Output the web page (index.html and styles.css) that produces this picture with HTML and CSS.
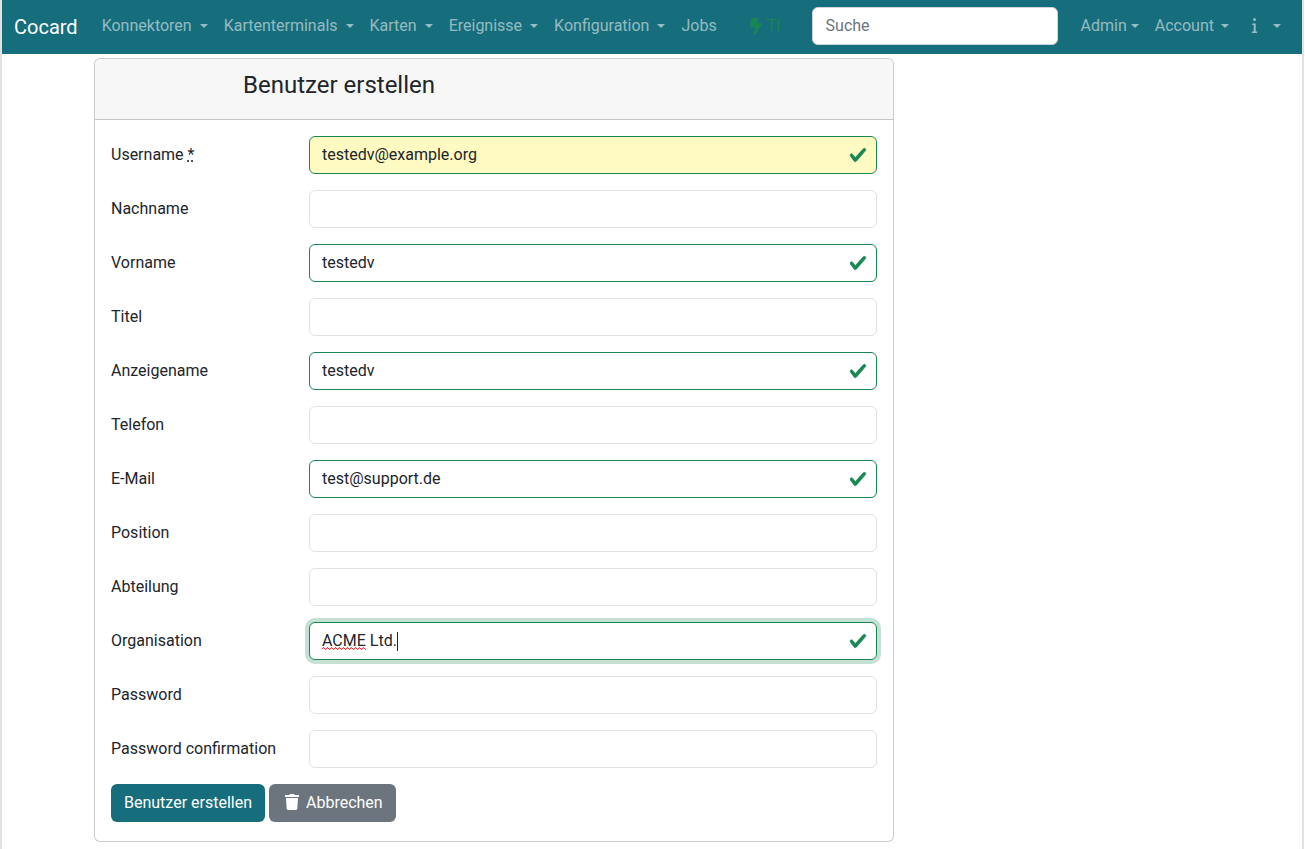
FILE: index.html
```html
<!DOCTYPE html>
<html lang="de">
<head>
<meta charset="utf-8">
<title>Benutzer erstellen</title>
<link rel="stylesheet" href="styles.css">
</head>
<body>
<nav class="navbar">
  <a class="brand">Cocard</a>
  <ul class="nav nav-main">
    <li class="nav-item caret">Konnektoren</li>
    <li class="nav-item caret">Kartenterminals</li>
    <li class="nav-item caret">Karten</li>
    <li class="nav-item caret">Ereignisse</li>
    <li class="nav-item caret">Konfiguration</li>
    <li class="nav-item">Jobs</li>
  </ul>
  <div class="ti">
    <svg class="bolt" viewBox="0 0 320 512" preserveAspectRatio="none" aria-hidden="true"><path d="M296 160H180.600L222.900 31.100C227 15.900 215.500 0 199.100 0H56C44 0 33.800 8.900 32.200 20.800L.2 260.800C-1.700 275.200 9.500 288 24 288h118.700l-46.100 194.500c-3.600 15.200 8 29.500 23.300 29.500 8.400 0 16.400-4.400 20.800-12l176-304c9.300-15.900-2.200-36-20.700-36z"/></svg>
    <span>TI</span>
  </div>
  <input class="search" type="text" placeholder="Suche">
  <ul class="nav nav-right">
    <li class="nav-item caret tight">Admin</li>
    <li class="nav-item caret wide">Account</li>
    <li class="nav-item caret info"><svg class="info-icon" viewBox="0 0 7 16" aria-hidden="true"><path d="M3.500 0a1.500 1.500 0 1 1 0 3 1.500 1.500 0 0 1 0-3zM1.200 5.500h3.500v8h1.500V15H.8v-1.500h1.900V7H1.200z"/></svg></li>
  </ul>
</nav>
<main class="page">
  <section class="card">
    <header class="card-header"><h3>Benutzer erstellen</h3></header>
    <form class="card-body">
      <div class="row"><label>Username <abbr title="required">*</abbr></label><input class="field valid autofill" type="text" value="testedv@example.org" spellcheck="false"></div>
      <div class="row"><label>Nachname</label><input class="field" type="text"></div>
      <div class="row"><label>Vorname</label><input class="field valid" type="text" value="testedv" spellcheck="false"></div>
      <div class="row"><label>Titel</label><input class="field" type="text"></div>
      <div class="row"><label>Anzeigename</label><input class="field valid" type="text" value="testedv" spellcheck="false"></div>
      <div class="row"><label>Telefon</label><input class="field" type="text"></div>
      <div class="row"><label>E-Mail</label><input class="field valid" type="text" value="test@support.de" spellcheck="false"></div>
      <div class="row"><label>Position</label><input class="field" type="text"></div>
      <div class="row"><label>Abteilung</label><input class="field" type="text"></div>
      <div class="row"><label>Organisation</label>
        <div class="field valid focused editing"><span class="typed"><span class="misspelt">ACME</span> Ltd.</span><span class="cursor"></span></div>
      </div>
      <div class="row"><label>Password</label><input class="field" type="text"></div>
      <div class="row"><label>Password confirmation</label><input class="field" type="text"></div>
      <div class="actions">
        <button class="btn btn-primary" type="button">Benutzer erstellen</button>
        <button class="btn btn-secondary" type="button"><svg class="trash" viewBox="0 0 448 512" aria-hidden="true"><path d="M432 32H312l-9.400-18.700A24 24 0 0 0 281.100 0H166.800a23.700 23.700 0 0 0-21.400 13.300L136 32H16A16 16 0 0 0 0 48v32a16 16 0 0 0 16 16h416a16 16 0 0 0 16-16V48a16 16 0 0 0-16-16zM53.200 467a48 48 0 0 0 47.900 45h245.800a48 48 0 0 0 47.900-45L416 128H32z"/></svg>Abbrechen</button>
      </div>
    </form>
  </section>
</main>
</body>
</html>
```

FILE: styles.css
```css
* { box-sizing: border-box; }

html {
  height: 100%;
  background: #e2e2e2;
  border-right: 1px solid #fff;
}

body {
  height: 100%;
  margin: 0 2px 0 2px;
  background: #fff;
  color: #212529;
  font: 400 16px/24px Roboto, "Liberation Sans", sans-serif;
  overflow: hidden;
}

.navbar {
  display: flex;
  align-items: center;
  height: 54px;
  padding: 0 12px 2px;
  background: #166d7b;
}

.brand {
  margin-right: 16px;
  padding-top: 2px;
  color: #fff;
  font-size: 20px;
  line-height: 30px;
}

.nav {
  display: flex;
  align-items: center;
  margin: 0;
  padding: 0;
  list-style: none;
}

.nav-item {
  padding: 0 8px;
  color: rgba(255, 255, 255, 0.55);
  white-space: nowrap;
}

.caret::after {
  content: "";
  display: inline-block;
  margin-left: 8px;
  vertical-align: 3px;
  border-top: 4.800px solid;
  border-right: 4.800px solid transparent;
  border-left: 4.800px solid transparent;
}

.tight::after { margin-left: 4px; }

.wide::after { margin-left: 7px; }

.ti {
  display: flex;
  align-items: center;
  gap: 5px;
  margin-left: 25px;
  color: #198754;
}

.bolt {
  width: 12px;
  height: 17px;
  fill: currentColor;
}

.search {
  width: 246px;
  height: 38px;
  margin-left: 31px;
  padding: 5px 13px 7px;
  background: #fff;
  border: 1px solid #ced4da;
  border-radius: 6px;
  color: #212529;
  font: inherit;
}

.search::placeholder { color: #6c757d; opacity: 1; }

.nav-right { margin-left: 15px; }

.info { margin-left: 6px; }

.info::after { margin-left: 15px; }

.info-icon {
  width: 7px;
  height: 16px;
  fill: currentColor;
  vertical-align: -3px;
}

.page { padding: 4px 0 0 92px; }

.card {
  width: 800px;
  height: 784px;
  background: #fff;
  border: 1px solid rgba(0, 0, 0, 0.2);
  border-radius: 6px;
}

.card-header {
  height: 61px;
  padding: 8px 148px;
  background: #f7f7f7;
  border-bottom: 1px solid rgba(0, 0, 0, 0.2);
  border-radius: 5px 5px 0 0;
}

.card-header h3 {
  margin: 0;
  font-size: 24px;
  font-weight: 400;
  line-height: 36px;
}

.card-body { padding: 16px; }

.row {
  display: flex;
  align-items: center;
  height: 38px;
  margin-bottom: 16px;
}

.row label { width: 198px; flex: none; }

abbr {
  text-decoration: underline dotted;
  cursor: help;
}

.field {
  width: 568px;
  height: 38px;
  padding: 5px 12px 7px;
  background: #fff;
  border: 1px solid #dee2e6;
  border-radius: 6px;
  color: #212529;
  font: inherit;
}

.editing {
  display: flex;
  align-items: center;
  padding: 6px 38px 6px 12px;
}

.valid {
  padding-right: 38px;
  border-color: #198754;
  background-image: url("data:image/svg+xml,%3csvg xmlns='http://www.w3.org/2000/svg' viewBox='0 0 8 8'%3e%3cpath fill='%23198754' stroke='%23198754' stroke-width='.25' d='M2.300 6.730.6 4.530c-.4-1.040.46-1.400 1.100-.8l1.100 1.400 3.400-3.800c.6-.63 1.600-.27 1.200.7l-4 4.600c-.43.5-.8.400-1.100.1z'/%3e%3c/svg%3e");
  background-repeat: no-repeat;
  background-position: right 9px center;
  background-size: 18px 18px;
}

.autofill { background-color: #fffac2; }

.focused { box-shadow: 0 0 0 4px rgba(25, 135, 84, 0.25); }

.typed { white-space: pre; }

.misspelt {
  background-image: url("data:image/svg+xml,%3csvg xmlns='http://www.w3.org/2000/svg' width='4' height='3' viewBox='0 0 4 3'%3e%3cpath fill='none' stroke='%23e8202a' stroke-width='.9' d='M0 2.500 1 .7 2 .7 3 2.300 4 2.500'/%3e%3c/svg%3e");
  background-repeat: repeat-x;
  background-position: left bottom;
  background-size: 4px 3px;
}

.cursor {
  display: inline-block;
  width: 1px;
  height: 19px;
  background: #212529;
}

.actions {
  display: flex;
  gap: 4px;
}

.btn {
  display: inline-flex;
  align-items: center;
  height: 38px;
  padding: 6px 12px;
  border: 1px solid transparent;
  border-radius: 6px;
  color: #fff;
  font: inherit;
}

.btn-primary { background: #166d7b; }

.btn-secondary { background: #6c757d; padding-left: 15px; }

.trash {
  width: 14px;
  height: 16px;
  margin-right: 7px;
  margin-bottom: 2px;
  fill: currentColor;
}
```
